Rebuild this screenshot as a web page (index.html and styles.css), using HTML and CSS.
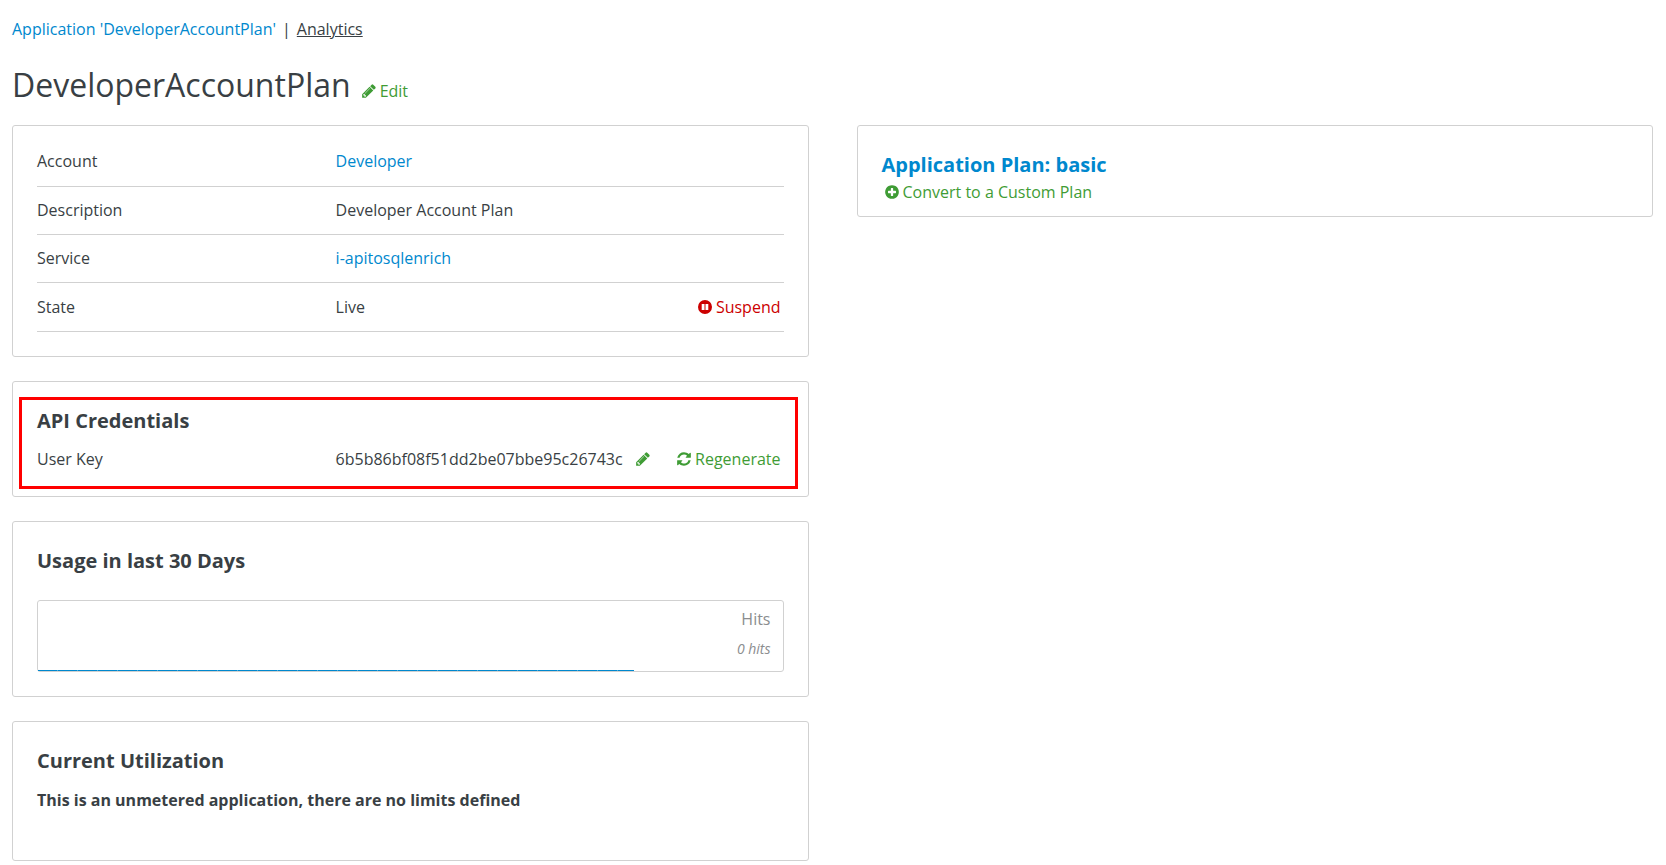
FILE: index.html
```html
<!DOCTYPE html>
<html lang="en">
<head>
<meta charset="utf-8">
<title>DeveloperAccountPlan</title>
<link rel="stylesheet" href="styles.css">
</head>
<body>
<svg class="symbols" aria-hidden="true">
  <symbol id="pencil" viewBox="0 0 1792 1792"><path d="M491 1536l91-91-235-235-91 91v107h128v128h107zm523-928q0-22-22-22-10 0-17 7l-542 542q-7 7-7 17 0 22 22 22 10 0 17-7l542-542q7-7 7-17zm-54-192l416 416-832 832h-416v-416zm683 96q0 53-37 90l-166 166-416-416 166-165q36-38 90-38 53 0 91 38l235 234q37 39 37 91z"/></symbol>
  <symbol id="refresh" viewBox="0 0 1792 1792"><path d="M1639 1056q0 5-1 7-64 268-268 434.500t-478 166.500q-146 0-282.500-55t-243.500-157l-129 129q-19 19-45 19t-45-19-19-45v-448q0-26 19-45t45-19h448q26 0 45 19t19 45-19 45l-137 137q71 66 161 102t187 36q134 0 250-65t186-179q11-17 53-117 8-23 30-23h192q13 0 22.500 9.500t9.500 22.500zm25-800v448q0 26-19 45t-45 19h-448q-26 0-45-19t-19-45 19-45l138-138q-148-137-349-137-134 0-250 65t-186 179q-11 17-53 117-8 23-30 23h-199q-13 0-22.500-9.500t-9.500-22.500v-7q65-268 270-434.500t480-166.500q146 0 284 55.500t245 156.500l130-129q19-19 45-19t45 19 19 45z"/></symbol>
  <symbol id="plus" viewBox="0 0 1792 1792"><path d="M1344 960v-128q0-26-19-45t-45-19h-256v-256q0-26-19-45t-45-19h-128q-26 0-45 19t-19 45v256h-256q-26 0-45 19t-19 45v128q0 26 19 45t45 19h256v256q0 26 19 45t45 19h128q26 0 45-19t19-45v-256h256q26 0 45-19t19-45zm320-64q0 209-103 385.500t-279.500 279.500-385.500 103-385.500-103-279.500-279.500-103-385.500 103-385.500 279.500-279.500 385.500-103 385.500 103 279.500 279.500 103 385.500z"/></symbol>
  <symbol id="pause" viewBox="0 0 16 16"><path fill-rule="evenodd" d="M8 1a7 7 0 1 1 0 14A7 7 0 0 1 8 1zM4.700 5v6h2.800V5zM8.500 5v6h2.800V5z"/></symbol>
</svg>
<nav class="crumbs">
  <a class="link" href="#">Application 'DeveloperAccountPlan'</a>
  <span class="crumbs-divider">|</span>
  <a class="crumbs-current" href="#">Analytics</a>
</nav>
<header class="title">
  <h1>DeveloperAccountPlan</h1>
  <a class="action" href="#"><svg class="icon"><use href="#pencil"/></svg>Edit</a>
</header>
<main class="columns">
  <div class="stack">
    <section class="panel">
      <table class="details">
        <tr><th scope="row">Account</th><td><a class="link" href="#">Developer</a></td><td></td></tr>
        <tr><th scope="row">Description</th><td>Developer Account Plan</td><td></td></tr>
        <tr><th scope="row">Service</th><td><a class="link" href="#">i-apitosqlenrich</a></td><td></td></tr>
        <tr><th scope="row">State</th><td>Live</td><td class="cell-action"><button class="action action-danger" type="button"><svg class="icon"><use href="#pause"/></svg>Suspend</button></td></tr>
      </table>
    </section>
    <section class="panel credentials">
      <h3>API Credentials</h3>
      <div class="key">
        <span class="key-label">User Key</span>
        <span>6b5b86bf08f51dd2be07bbe95c26743c</span>
        <a class="action key-edit" href="#" aria-label="Edit user key"><svg class="icon"><use href="#pencil"/></svg></a>
        <button class="action key-regenerate" type="button"><svg class="icon"><use href="#refresh"/></svg>Regenerate</button>
      </div>
    </section>
    <section class="panel">
      <h3>Usage in last 30 Days</h3>
      <div class="chart">
        <span class="chart-name">Hits</span>
        <em class="chart-total">0 hits</em>
        <div class="chart-line"></div>
      </div>
    </section>
    <section class="panel utilization">
      <h3>Current Utilization</h3>
      <p>This is an unmetered application, there are no limits defined</p>
    </section>
  </div>
  <aside class="panel plan">
    <h3><a class="link" href="#">Application Plan: basic</a></h3>
    <a class="action" href="#"><svg class="icon"><use href="#plus"/></svg>Convert to a Custom Plan</a>
  </aside>
</main>
</body>
</html>
```
FILE: styles.css
```css
* {
  box-sizing: border-box;
}

body {
  margin: 0;
  padding: 17px 13px 4px 12px;
  background: #fff;
  color: #393f44;
  font: 16px/24px "Open Sans", sans-serif;
}

h1, h3, p {
  margin: 0;
}

h3 {
  font-size: 20px;
  font-weight: 700;
  line-height: 30px;
}

.symbols {
  display: none;
}

.link {
  color: #0088ce;
  text-decoration: none;
}

.crumbs {
  display: flex;
  gap: 6px;
}

.crumbs-current {
  color: inherit;
}

.title {
  display: flex;
  align-items: baseline;
  gap: 10px;
  margin: 20px 0 16px;
}

.title h1 {
  font-size: 32px;
  font-weight: 400;
  line-height: 48px;
}

.action {
  display: inline-flex;
  align-items: baseline;
  gap: 3px;
  padding: 0;
  border: 0;
  background: none;
  color: #3f9c35;
  font: inherit;
  text-decoration: none;
}

.action-danger {
  color: #c00;
}

.icon {
  align-self: center;
  width: 16px;
  height: 16px;
  fill: currentColor;
}

.columns {
  display: grid;
  grid-template-columns: 1fr 1fr;
  align-items: start;
  gap: 48px;
}

.stack {
  display: grid;
  gap: 24px;
}

.panel {
  padding: 24px;
  border: 1px solid #d1d1d1;
  border-radius: 3px;
}

.details {
  width: 100%;
  margin-top: -11px;
  border-spacing: 0;
  table-layout: fixed;
}

.details th,
.details td {
  padding: 11px 0 12px;
  border-bottom: 1px solid #d1d1d1;
  font-weight: 400;
  text-align: left;
}

.details th {
  width: 40%;
}

.details .cell-action {
  padding-right: 3px;
  text-align: right;
}

.details button {
  vertical-align: top;
}

.details tr:first-child > * {
  padding: 10px 0 13px;
}

.details tr:last-child > * {
  padding-top: 12px;
}

.credentials {
  position: relative;
}

.credentials::after {
  content: "";
  position: absolute;
  inset: 15px 10px 7px 6px;
  border: 3px solid #f00;
  pointer-events: none;
}

.key {
  display: flex;
  align-items: center;
  margin: 11px 0 1px;
}

.key-label {
  width: 40%;
  flex: none;
}

.key-edit {
  margin-left: 12px;
}

.key-regenerate {
  margin: 0 3px 0 auto;
}

.chart {
  position: relative;
  display: flex;
  flex-direction: column;
  align-items: flex-end;
  gap: 6px;
  height: 72px;
  margin-top: 24px;
  padding: 6px 12px;
  border: 1px solid #d1d1d1;
  border-radius: 3px;
  color: #8b8d8f;
}

.chart-total {
  font-size: 14px;
}

.chart-line {
  position: absolute;
  bottom: 0;
  left: 0;
  width: 80%;
  height: 1px;
  background: repeating-linear-gradient(to right, #0088ce 0 19px, #4dabdd 19px 20px);
}

.utilization p {
  margin: 12px 0 24px;
  font-weight: 700;
}

.plan {
  padding-bottom: 12px;
}

.plan .action {
  display: flex;
  width: fit-content;
  margin-left: 2px;
}
```
